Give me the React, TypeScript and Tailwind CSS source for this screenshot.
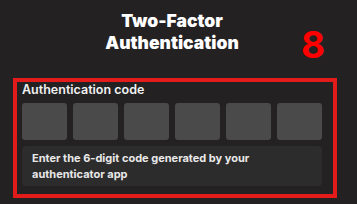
const DIGITS = [0, 1, 2, 3, 4, 5];

const App = () => {
  return (
    <div className="relative h-[204px] w-[357px] overflow-hidden bg-[#232122] font-['Inter',sans-serif] text-white">
      <h1 className="ml-[22px] w-[300px] pt-[10px] text-center text-[17.5px] font-black leading-[22px]">
        Two-Factor
        <br />
        Authentication
      </h1>
      <span className="absolute left-[301px] top-[22px] text-[37px] font-bold leading-[46px] text-[#ff0000]">8</span>

      <section className="ml-[13px] mt-[24px] h-[120px] w-[324px] border-4 border-[#e31b1b] pl-[5px]">
        <label className="block text-[12.5px] font-semibold leading-[16px] text-[#f2f2f2]">Authentication code</label>
        <div className="mt-[5px] flex w-[300px] gap-[6px]">
          {DIGITS.map((d) => (
            <div key={d} className="h-[37px] w-[45px] rounded-[3px] bg-[#4a4a4a]" />
          ))}
        </div>
        <div className="mt-[6px] h-[40px] w-[300px] rounded-[4px] bg-[#2d2c2c] px-[10px] pt-[4px]">
          <p className="max-w-[240px] text-[11px] font-bold leading-[16px] text-[#e8e8e8]">
            Enter the 6-digit code generated by your authenticator app
          </p>
        </div>
      </section>
    </div>
  );
};

export default App;
